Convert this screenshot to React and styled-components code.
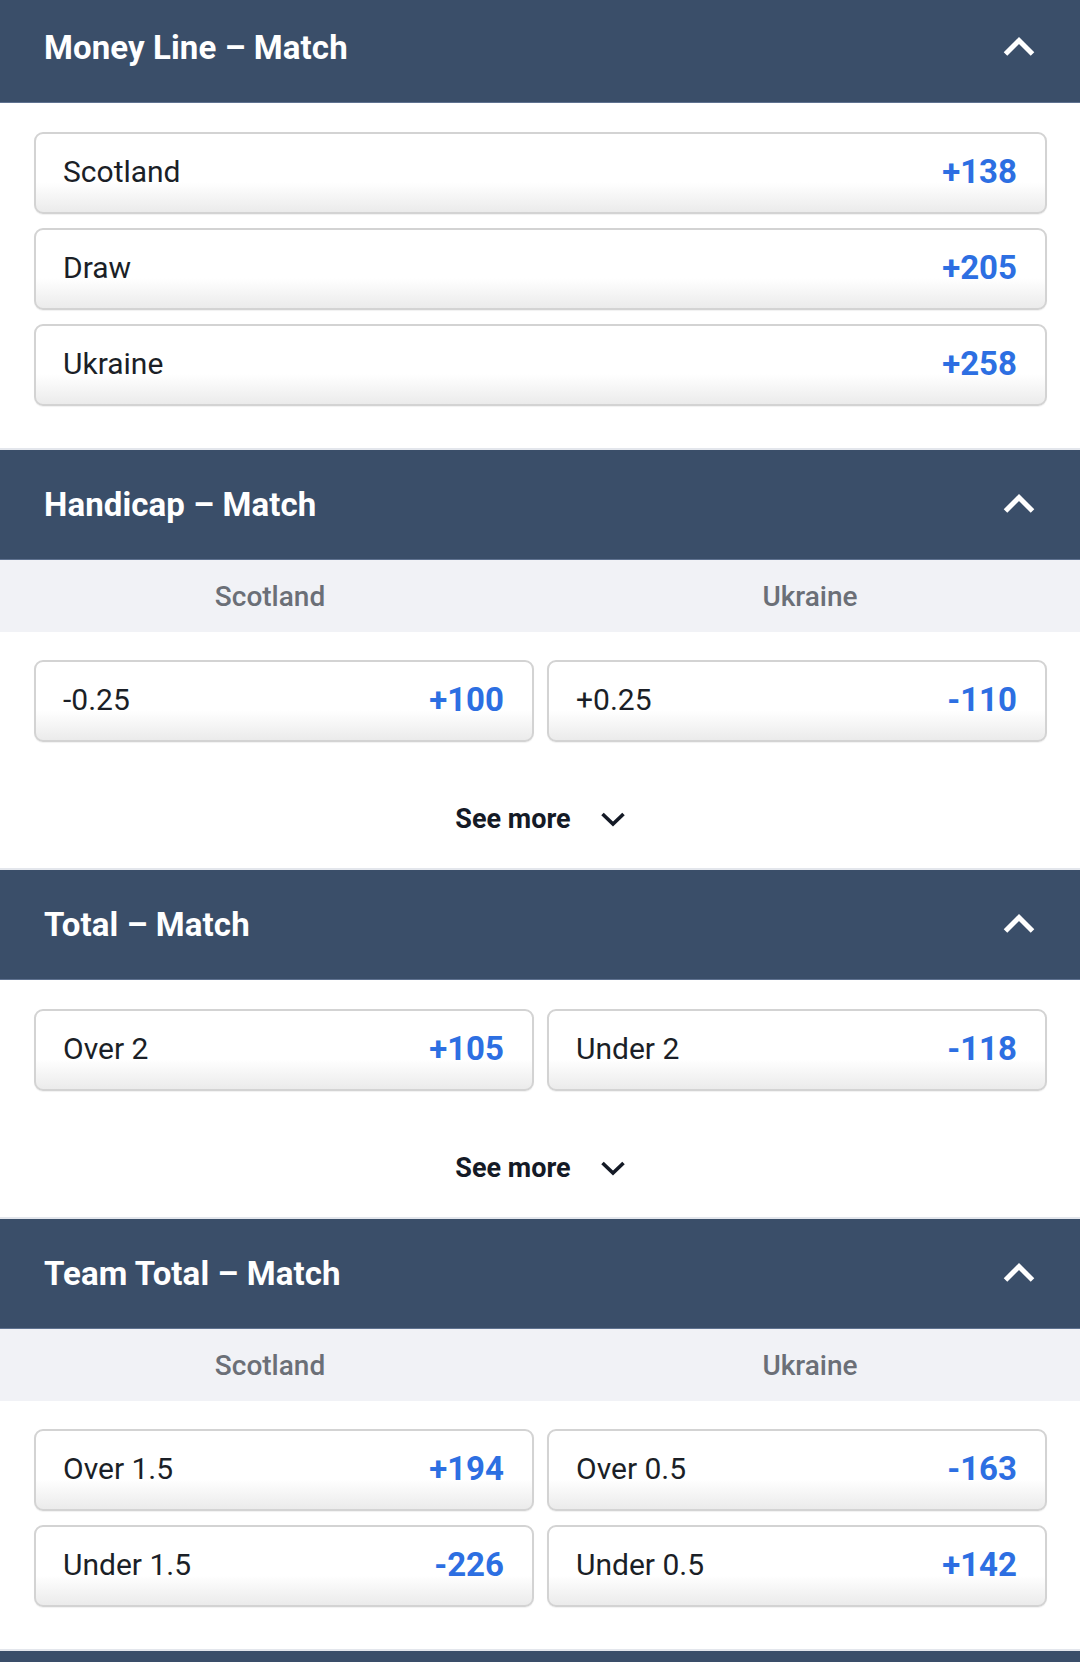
import React from "react";
import styled, { createGlobalStyle } from "styled-components";

const GlobalStyle = createGlobalStyle`
  html, body {
    margin: 0;
    padding: 0;
    background: #ffffff;
    font-family: Roboto, "Liberation Sans", Arial, sans-serif;
  }
  * {
    box-sizing: border-box;
  }
`;

const markets = [
  {
    title: "Money Line – Match",
    columns: 1,
    odds: [
      { label: "Scotland", price: "+138" },
      { label: "Draw", price: "+205" },
      { label: "Ukraine", price: "+258" }
    ]
  },
  {
    title: "Handicap – Match",
    columns: 2,
    teams: ["Scotland", "Ukraine"],
    seeMore: true,
    odds: [
      { label: "-0.25", price: "+100" },
      { label: "+0.25", price: "-110" }
    ]
  },
  {
    title: "Total – Match",
    columns: 2,
    seeMore: true,
    odds: [
      { label: "Over 2", price: "+105" },
      { label: "Under 2", price: "-118" }
    ]
  },
  {
    title: "Team Total – Match",
    columns: 2,
    teams: ["Scotland", "Ukraine"],
    odds: [
      { label: "Over 1.5", price: "+194" },
      { label: "Over 0.5", price: "-163" },
      { label: "Under 1.5", price: "-226" },
      { label: "Under 0.5", price: "+142" }
    ]
  }
];

const ChevronUp = () => (
  <svg width="34" height="22" viewBox="0 0 34 22">
    <polyline
      points="3.5,18 17,4.5 30.5,18"
      fill="none"
      stroke="#ffffff"
      strokeWidth="5"
      strokeLinecap="butt"
      strokeLinejoin="miter"
    />
  </svg>
);

const ChevronDown = () => (
  <svg width="26" height="16" viewBox="0 0 26 16">
    <polyline
      points="2.5,3 13,13 23.5,3"
      fill="none"
      stroke="#141a26"
      strokeWidth="3.6"
      strokeLinecap="butt"
      strokeLinejoin="miter"
    />
  </svg>
);

export default function App() {
  return (
    <>
      <GlobalStyle />
      <Page>
        {markets.map(market => (
          <Section key={market.title}>
            <Header>
              <Title>{market.title}</Title>
              <ChevronUp />
            </Header>
            {market.teams && (
              <TeamsBar>
                {market.teams.map(team => (
                  <TeamName key={team}>{team}</TeamName>
                ))}
              </TeamsBar>
            )}
            <Body $withMore={market.seeMore} $withTeams={!!market.teams}>
              <OddsGrid $columns={market.columns}>
                {market.odds.map(item => (
                  <OddButton key={item.label}>
                    <OddLabel>{item.label}</OddLabel>
                    <OddPrice>{item.price}</OddPrice>
                  </OddButton>
                ))}
              </OddsGrid>
              {market.seeMore && (
                <SeeMore>
                  <SeeMoreText>See more</SeeMoreText>
                  <ChevronDown />
                </SeeMore>
              )}
            </Body>
          </Section>
        ))}
        <Header />
      </Page>
    </>
  );
}

const Page = styled.div`
  margin-top: -9px;
  width: 1080px;
`;

const Section = styled.section`
  display: flex;
  flex-direction: column;
`;

const Header = styled.div`
  height: 112px;
  border-top: 2px solid #e3e6ec;
  background: #3a4e69;
  box-shadow: inset 0 -1px 0 #5f7290;
  display: flex;
  align-items: center;
  justify-content: space-between;
  padding: 0 44px 2px 44px;
`;

const Title = styled.div`
  color: #ffffff;
  font-size: 33px;
  font-weight: 700;
  letter-spacing: 0.1px;
`;

const TeamsBar = styled.div`
  height: 72px;
  background: #f1f2f6;
  display: grid;
  grid-template-columns: 1fr 1fr;
  align-items: center;
`;

const TeamName = styled.div`
  text-align: center;
  color: #6b6f77;
  font-size: 28px;
  font-weight: 500;
`;

const Body = styled.div`
  padding: ${p => (p.$withTeams ? "28px" : "29px")} 33px
    ${p => (p.$withMore ? "0" : "42px")} 34px;
`;

const OddsGrid = styled.div`
  display: grid;
  grid-template-columns: repeat(${p => p.$columns}, 1fr);
  column-gap: 13px;
  row-gap: 14px;
`;

const OddButton = styled.div`
  height: 82px;
  border: 2px solid #d3d3d3;
  border-radius: 9px;
  background: linear-gradient(to bottom, #ffffff 0%, #ffffff 62%, #ebebeb 100%);
  box-shadow: 0 1px 1px rgba(0, 0, 0, 0.06);
  display: flex;
  align-items: center;
  justify-content: space-between;
  padding: 0 28px 4px 27px;
`;

const OddLabel = styled.span`
  color: #1b1f27;
  font-size: 30px;
  font-weight: 400;
`;

const OddPrice = styled.span`
  color: #2d6fe2;
  font-size: 33px;
  font-weight: 700;
`;

const SeeMore = styled.div`
  margin-top: 27px;
  height: 99px;
  display: flex;
  align-items: center;
  justify-content: center;
  gap: 29px;
`;

const SeeMoreText = styled.span`
  color: #141a26;
  font-size: 27px;
  font-weight: 700;
`;
